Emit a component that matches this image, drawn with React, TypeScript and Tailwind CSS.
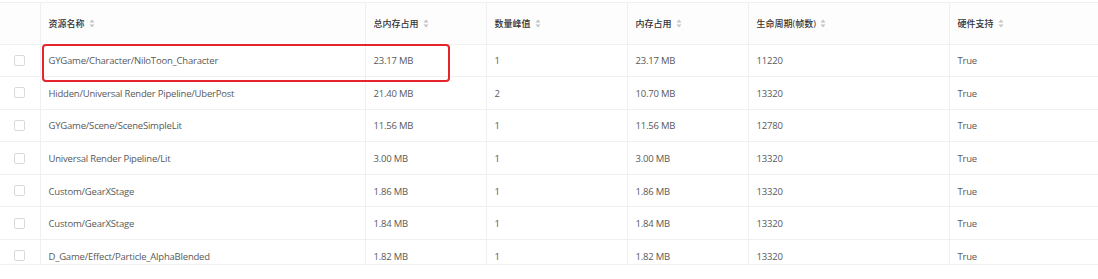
const rows = [
  ["GYGame/Character/NiloToon_Character", "23.17 MB", "1", "23.17 MB", "11220", "True"],
  ["Hidden/Universal Render Pipeline/UberPost", "21.40 MB", "2", "10.70 MB", "13320", "True"],
  ["GYGame/Scene/SceneSimpleLit", "11.56 MB", "1", "11.56 MB", "12780", "True"],
  ["Universal Render Pipeline/Lit", "3.00 MB", "1", "3.00 MB", "13320", "True"],
  ["Custom/GearXStage", "1.86 MB", "1", "1.86 MB", "13320", "True"],
  ["Custom/GearXStage", "1.84 MB", "1", "1.84 MB", "13320", "True"],
  ["D_Game/Effect/Particle_AlphaBlended", "1.82 MB", "1", "1.82 MB", "13320", "True"],
];

const headers = ["资源名称", "总内存占用", "数量峰值", "内存占用", "生命周期(帧数)", "硬件支持"];

function SortIcon() {
  return (
    <svg width="6" height="9" viewBox="0 0 6 9" className="ml-[4px] shrink-0">
      <path d="M3 0.5 L5.5 3.5 L0.5 3.5 Z" fill="#c4c4c4" />
      <path d="M3 8.5 L5.5 5.5 L0.5 5.5 Z" fill="#c4c4c4" />
    </svg>
  );
}

function Checkbox() {
  return <span className="block w-[11px] h-[11px] rounded-[2px] border border-[#d9d9d9] bg-white mx-auto" />;
}

export default function App() {
  return (
    <div
      className="w-[1098px] h-[279px] bg-white pt-[2px] overflow-hidden"
      style={{ fontFamily: '"Open Sans", "Noto Sans CJK SC", sans-serif' }}
    >
      <div className="relative h-[263px] overflow-hidden border-t border-b border-[#f0f0f0]">
        <table className="table-fixed border-collapse w-[1160px] text-[9.5px]">
          <colgroup>
            <col className="w-[40px]" />
            <col className="w-[325px]" />
            <col className="w-[121px]" />
            <col className="w-[141px]" />
            <col className="w-[121px]" />
            <col className="w-[201px]" />
            <col className="w-[211px]" />
          </colgroup>
          <thead>
            <tr className="h-[41px] bg-[#fdfdfd] border-b border-[#f0f0f0]">
              <th className="border-r border-[#f0f0f0]" />
              {headers.map((h) => (
                <th key={h} className="border-r border-[#f0f0f0] px-[8px] text-left font-medium text-[9px] text-[#333]">
                  <div className="flex items-center">
                    <span>{h}</span>
                    <SortIcon />
                  </div>
                </th>
              ))}
            </tr>
          </thead>
          <tbody>
            {rows.map((r, i) => (
              <tr key={i} className="h-[32.6px] border-b border-[#f0f0f0]">
                <td className="border-r border-[#f0f0f0]">
                  <Checkbox />
                </td>
                {r.map((c, j) => (
                  <td
                    key={j}
                    className="border-r border-[#f0f0f0] px-[8px] pt-[2px] text-[#595959] whitespace-nowrap tracking-[-0.2px]"
                  >
                    {c}
                  </td>
                ))}
              </tr>
            ))}
          </tbody>
        </table>
        <div className="absolute left-[42px] top-[41px] w-[408px] h-[38px] rounded-[4px] border-[2.5px] border-[#e5242b]" />
      </div>
    </div>
  );
}
